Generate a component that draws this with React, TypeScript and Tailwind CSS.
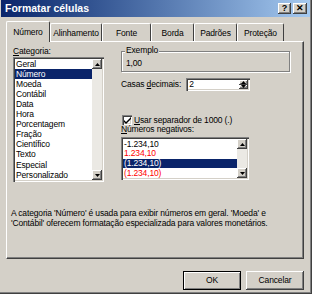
import type { ReactNode } from 'react'

const categories = [
  'Geral',
  'Número',
  'Moeda',
  'Contábil',
  'Data',
  'Hora',
  'Porcentagem',
  'Fração',
  'Científico',
  'Texto',
  'Especial',
  'Personalizado',
]

const tabs = [
  { label: 'Número', w: 'w-[44px]' },
  { label: 'Alinhamento', w: 'w-[52px]' },
  { label: 'Fonte', w: 'w-[49px]' },
  { label: 'Borda', w: 'w-[43px]' },
  { label: 'Padrões', w: 'w-[43px]' },
  { label: 'Proteção', w: 'w-[47px]' },
]

const negatives = [
  { text: '-1.234,10', red: false },
  { text: '1.234,10', red: true },
  { text: '(1.234,10)', red: false, selected: true },
  { text: '(1.234,10)', red: true },
]

const raised =
  'bg-[#d4d0c8] shadow-[inset_-1px_-1px_0_#404040,inset_1px_1px_0_#fff,inset_-2px_-2px_0_#808080]'

function Arrow({ up }: { up: boolean }) {
  return (
    <svg width="5" height="3" viewBox="0 0 5 3" className="block">
      <path d={up ? 'M2.5 0 L5 3 L0 3 Z' : 'M0 0 L5 0 L2.5 3 Z'} fill="#000" />
    </svg>
  )
}

function ScrollBtn({ up, h = 'h-[10px]' }: { up: boolean; h?: string }) {
  return (
    <div className={`${h} w-full flex items-center justify-center ${raised}`}>
      <Arrow up={up} />
    </div>
  )
}

function Sunken({ className, children }: { className: string; children: ReactNode }) {
  return (
    <div
      className={`bg-white shadow-[inset_1px_1px_0_#808080,inset_2px_2px_0_#404040,inset_-1px_-1px_0_#fff,inset_-2px_-2px_0_#d4d0c8] ${className}`}
    >
      {children}
    </div>
  )
}

function VScroll() {
  return (
    <div className="w-[10px] flex flex-col bg-[#ebe9e4]">
      <ScrollBtn up />
      <div className="flex-1" />
      <ScrollBtn up={false} />
    </div>
  )
}

export default function App() {
  return (
    <div
      className="w-[312px] h-[294px] bg-[#d4d0c8] text-[8.5px] tracking-[-0.15px] leading-none text-black border-r border-b border-[#404040] shadow-[inset_-1px_-1px_0_#808080]"
      style={{ fontFamily: '"Liberation Sans", Arial, sans-serif' }}
    >
      {/* title bar */}
      <div className="h-[17px] mx-[1px] flex items-center justify-between bg-gradient-to-r from-[#0a246a] to-[#a6caf0] pl-[4px] pr-[3px]">
        <span className="text-white font-bold text-[10.5px] tracking-normal">Formatar células</span>
        <div className="flex gap-[2px]">
          <div className={`w-[13px] h-[11px] flex items-center justify-center font-bold text-[9px] ${raised}`}>
            ?
          </div>
          <div className={`w-[14px] h-[11px] flex items-center justify-center font-bold text-[9px] ${raised}`}>
            ✕
          </div>
        </div>
      </div>

      <div className="pl-[6px] pr-[7px] pt-[4px]">
        {/* tabs */}
        <div className="flex items-end h-[20px] pl-[1px] relative z-10">
          {tabs.map((t, i) => (
            <div
              key={t.label}
              className={`flex items-center justify-center border-t border-l border-white border-r border-r-[#404040] rounded-t-[2px] bg-[#d4d0c8] ${
                i === 0 ? 'h-[21px] -mb-[1px] -ml-[1px] w-[44px]' : `h-[18px] ${t.w}`
              }`}
            >
              <span className="mt-[1px]">{t.label}</span>
            </div>
          ))}
        </div>

        {/* panel */}
        <div className="h-[218px] border-t border-l border-white border-r border-b border-r-[#404040] border-b-[#404040] shadow-[inset_-1px_-1px_0_#808080] pl-[6px] pt-[4px] flex flex-col">
          <div className="flex">
            {/* left column */}
            <div className="w-[91px] flex flex-col">
              <span className="h-[10px] flex items-center">
                <span>
                  <u>C</u>ategoria:
                </span>
              </span>
              <Sunken className="mt-[1px] h-[125px] flex p-[2px]">
                <div className="flex-1 flex flex-col">
                  {categories.map((c, i) => (
                    <div
                      key={c}
                      className={`h-[10.2px] flex items-center pl-[1px] ${
                        i === 1 ? 'bg-[#0a246a] text-white' : ''
                      }`}
                    >
                      {c}
                    </div>
                  ))}
                </div>
                <VScroll />
              </Sunken>
            </div>

            {/* right column */}
            <div className="ml-[17px] flex-1 flex flex-col">
              <div className="relative mt-[5px] h-[21px] w-[169px] border border-[#808080] shadow-[1px_1px_0_#fff,inset_1px_1px_0_#fff]">
                <span className="absolute -top-[6px] left-[3px] bg-[#d4d0c8] px-[1px]">Exemplo</span>
                <span className="absolute top-[7px] left-[4px]">1,00</span>
              </div>

              <div className="mt-[6px] h-[13px] flex items-center">
                <span>
                  Casas <u>d</u>ecimais:
                </span>
                <Sunken className="ml-[5px] w-[64px] h-[13px] flex p-[2px]">
                  <span className="flex-1 pl-[1px] flex items-center">2</span>
                  <div className="w-[9px] flex flex-col">
                    <ScrollBtn up h="h-[4.5px]" />
                    <ScrollBtn up={false} h="h-[4.5px]" />
                  </div>
                </Sunken>
              </div>

              <div className="mt-[24px] h-[10px] flex items-center">
                <Sunken className="ml-[1px] w-[10px] h-[10px] flex items-center justify-center">
                  <svg width="7" height="7" viewBox="0 0 7 7">
                    <path d="M0 3 L2 5 L7 0 L7 2 L2 7 L0 5 Z" fill="#000" />
                  </svg>
                </Sunken>
                <span className="ml-[2px]">
                  <u>U</u>sar separador de 1000 (.)
                </span>
              </div>

              <span className="h-[9px] flex items-center">
                <span>
                  <u>N</u>úmeros negativos:
                </span>
              </span>

              <Sunken className="mt-[3px] w-[128px] h-[43px] flex p-[2px]">
                <div className="flex-1 flex flex-col">
                  {negatives.map((n, i) => (
                    <div
                      key={i}
                      className={`h-[10px] flex items-center pl-[1px] ${
                        n.selected ? 'bg-[#0a246a] text-white' : n.red ? 'text-[#ff0000]' : ''
                      }`}
                    >
                      {n.text}
                    </div>
                  ))}
                </div>
                <VScroll />
              </Sunken>
            </div>
          </div>

          <p className="mt-[26px] -ml-[2px] leading-[10px]">
            A categoria 'Número' é usada para exibir números em geral. 'Moeda' e
            <br />
            'Contábil' oferecem formatação especializada para valores monetários.
          </p>
        </div>

        {/* buttons */}
        <div className="flex justify-end gap-[5px] mt-[12px]">
          <button className="w-[58px] h-[19px] bg-[#d4d0c8] border border-black shadow-[inset_1px_1px_0_#fff,inset_-1px_-1px_0_#808080] flex items-center justify-center">
            OK
          </button>
          <button className={`w-[58px] h-[19px] flex items-center justify-center ${raised}`}>
            Cancelar
          </button>
        </div>
      </div>
    </div>
  )
}
